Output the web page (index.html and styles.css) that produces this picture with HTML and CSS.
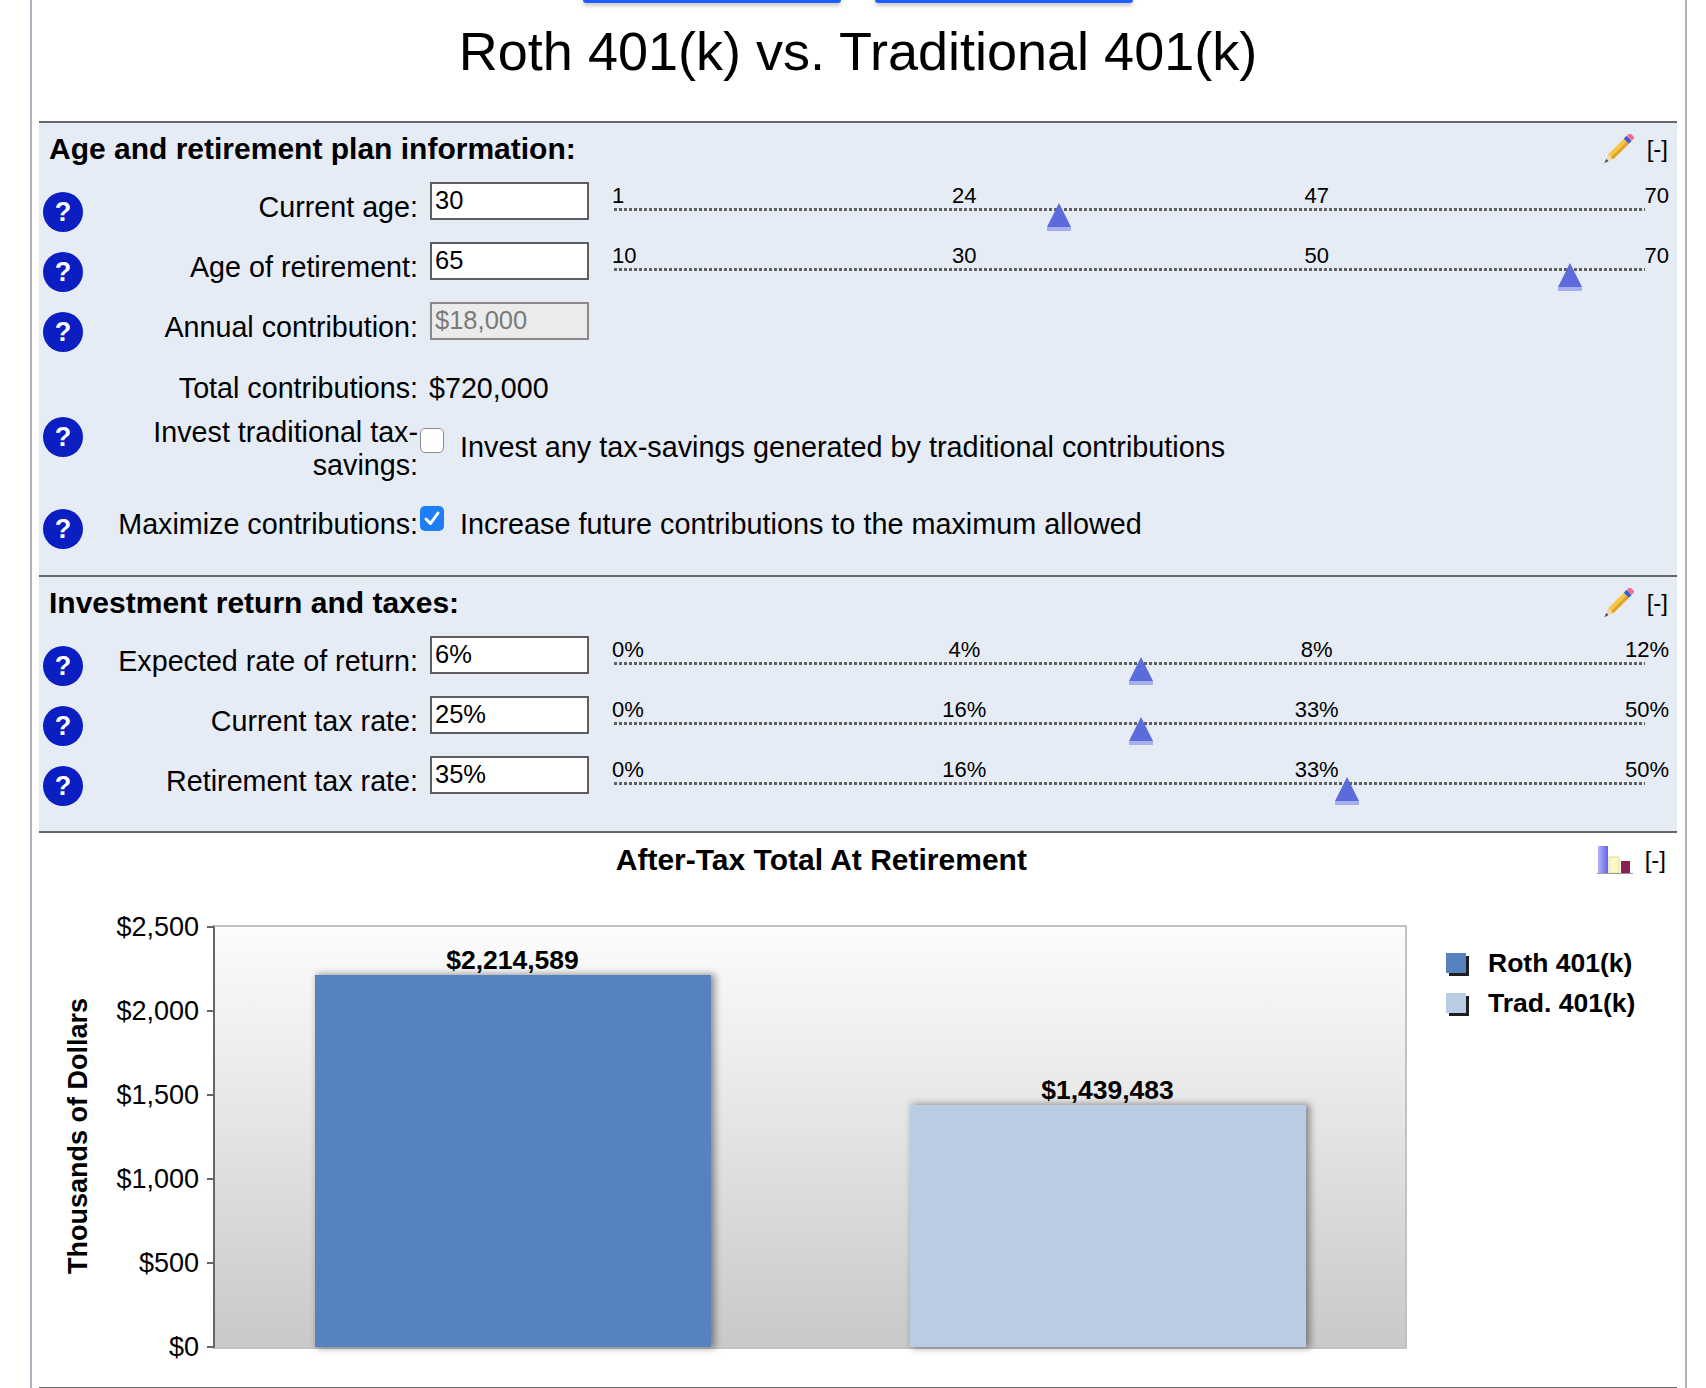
FILE: index.html
```html
<!DOCTYPE html>
<html lang="en">
<head>
<meta charset="utf-8">
<title>Roth 401(k) vs. Traditional 401(k)</title>
<link rel="stylesheet" href="styles.css">
</head>
<body>
<div class="frame">
  <div class="tabs"><span class="tab"></span><span class="tab"></span></div>
  <h1 class="title">Roth 401(k) vs. Traditional 401(k)</h1>

  <section class="panel panel-age">
    <div class="panel-head">
      <h2 class="panel-title">Age and retirement plan information:</h2>
      <div class="tools">
        <svg class="pencil" width="31" height="30" viewBox="0 0 31 30" aria-hidden="true">
          <g transform="rotate(-45 15.5 15) translate(15.5 15)">
            <polygon points="-20,0 -15.5,-1.6 -15.5,1.6" fill="#4a4a4a"/>
            <polygon points="-15.5,-1.6 -11,-3.6 -11,3.6 -15.5,1.6" fill="#f3d7a6"/>
            <rect x="-11" y="-3.6" width="22" height="7.2" fill="#f6c64a"/>
            <rect x="-11" y="0.6" width="22" height="3" fill="#e0a326"/>
            <rect x="11" y="-3.6" width="4" height="7.2" fill="#3f5cc8"/>
            <rect x="15" y="-3.6" width="4.5" height="7.2" rx="2" fill="#f2708c"/>
          </g>
        </svg>
        <span class="toggle">[-]</span>
      </div>
    </div>

    <div class="row r-first">
      <span class="help">?</span>
      <span class="label">Current age:</span>
      <input class="field" type="text" value="30">
      <div class="slider">
        <div class="ticks"><span class="t0">1</span><span class="t1">24</span><span class="t2">47</span><span class="t3">70</span></div>
        <div class="track">
          <span class="thumb" style="left: calc(0.4203 * 1030px)"><svg width="24" height="28" viewBox="0 0 24 28"><polygon points="12,0 24,24 0,24" fill="#5b6bdc"/><rect x="0" y="24" width="24" height="4" fill="#a7afee"/></svg></span>
        </div>
      </div>
    </div>

    <div class="row">
      <span class="help">?</span>
      <span class="label">Age of retirement:</span>
      <input class="field" type="text" value="65">
      <div class="slider">
        <div class="ticks"><span class="t0">10</span><span class="t1">30</span><span class="t2">50</span><span class="t3">70</span></div>
        <div class="track">
          <span class="thumb" style="left: calc(0.9167 * 1030px)"><svg width="24" height="28" viewBox="0 0 24 28"><polygon points="12,0 24,24 0,24" fill="#5b6bdc"/><rect x="0" y="24" width="24" height="4" fill="#a7afee"/></svg></span>
        </div>
      </div>
    </div>

    <div class="row">
      <span class="help">?</span>
      <span class="label">Annual contribution:</span>
      <input class="field" type="text" value="$18,000" disabled>
    </div>

    <div class="row r-total">
      <span class="help-space"></span>
      <span class="label">Total contributions:</span>
      <span class="value">$720,000</span>
    </div>

    <div class="row r-invest">
      <span class="help">?</span>
      <span class="label">Invest traditional tax-savings:</span>
      <div class="check-field cf-invest">
        <span class="cb"></span>
        <span class="check-text">Invest any tax-savings generated by traditional contributions</span>
      </div>
    </div>

    <div class="row r-max">
      <span class="help">?</span>
      <span class="label">Maximize contributions:</span>
      <div class="check-field cf-max">
        <span class="cb checked"><svg width="24" height="25" viewBox="0 0 24 25"><path d="M6 13 L10.5 17.5 L18 7" fill="none" stroke="#fff" stroke-width="3" stroke-linecap="round" stroke-linejoin="round"/></svg></span>
        <span class="check-text">Increase future contributions to the maximum allowed</span>
      </div>
    </div>
  </section>

  <section class="panel panel-tax">
    <div class="panel-head">
      <h2 class="panel-title">Investment return and taxes:</h2>
      <div class="tools">
        <svg class="pencil" width="31" height="30" viewBox="0 0 31 30" aria-hidden="true">
          <g transform="rotate(-45 15.5 15) translate(15.5 15)">
            <polygon points="-20,0 -15.5,-1.6 -15.5,1.6" fill="#4a4a4a"/>
            <polygon points="-15.5,-1.6 -11,-3.6 -11,3.6 -15.5,1.6" fill="#f3d7a6"/>
            <rect x="-11" y="-3.6" width="22" height="7.2" fill="#f6c64a"/>
            <rect x="-11" y="0.6" width="22" height="3" fill="#e0a326"/>
            <rect x="11" y="-3.6" width="4" height="7.2" fill="#3f5cc8"/>
            <rect x="15" y="-3.6" width="4.5" height="7.2" rx="2" fill="#f2708c"/>
          </g>
        </svg>
        <span class="toggle">[-]</span>
      </div>
    </div>

    <div class="row r-first">
      <span class="help">?</span>
      <span class="label">Expected rate of return:</span>
      <input class="field" type="text" value="6%">
      <div class="slider">
        <div class="ticks"><span class="t0">0%</span><span class="t1">4%</span><span class="t2">8%</span><span class="t3">12%</span></div>
        <div class="track">
          <span class="thumb" style="left: calc(0.5 * 1030px)"><svg width="24" height="28" viewBox="0 0 24 28"><polygon points="12,0 24,24 0,24" fill="#5b6bdc"/><rect x="0" y="24" width="24" height="4" fill="#a7afee"/></svg></span>
        </div>
      </div>
    </div>

    <div class="row">
      <span class="help">?</span>
      <span class="label">Current tax rate:</span>
      <input class="field" type="text" value="25%">
      <div class="slider">
        <div class="ticks"><span class="t0">0%</span><span class="t1">16%</span><span class="t2">33%</span><span class="t3">50%</span></div>
        <div class="track">
          <span class="thumb" style="left: calc(0.5 * 1030px)"><svg width="24" height="28" viewBox="0 0 24 28"><polygon points="12,0 24,24 0,24" fill="#5b6bdc"/><rect x="0" y="24" width="24" height="4" fill="#a7afee"/></svg></span>
        </div>
      </div>
    </div>

    <div class="row">
      <span class="help">?</span>
      <span class="label">Retirement tax rate:</span>
      <input class="field" type="text" value="35%">
      <div class="slider">
        <div class="ticks"><span class="t0">0%</span><span class="t1">16%</span><span class="t2">33%</span><span class="t3">50%</span></div>
        <div class="track">
          <span class="thumb" style="left: calc(0.7 * 1030px)"><svg width="24" height="28" viewBox="0 0 24 28"><polygon points="12,0 24,24 0,24" fill="#5b6bdc"/><rect x="0" y="24" width="24" height="4" fill="#a7afee"/></svg></span>
        </div>
      </div>
    </div>
  </section>

  <section class="chart">
    <div class="chart-head">
      <h2 class="chart-title">After-Tax Total At Retirement</h2>
      <div class="tools chart-tools">
        <svg class="bars-icon" width="36" height="28" viewBox="0 0 36 28" aria-hidden="true">
          <defs>
            <linearGradient id="gBlue" x1="0" y1="0" x2="1" y2="0">
              <stop offset="0" stop-color="#b4b4fa"/>
              <stop offset="1" stop-color="#6464ee"/>
            </linearGradient>
          </defs>
          <rect x="1" y="0" width="10" height="27" fill="url(#gBlue)"/>
          <rect x="12" y="11" width="10" height="16" fill="#fbf8c4" stroke="#e2dc9a" stroke-width="1"/>
          <rect x="24" y="15" width="9" height="12" fill="#8a1f52"/>
          <rect x="0" y="27" width="36" height="1" fill="#9a9a9a"/>
        </svg>
        <span class="toggle">[-]</span>
      </div>
    </div>

    <div class="chart-body">
      <div class="ytitle">Thousands of Dollars</div>
      <div class="ylabels">
        <div class="ytick"><span>$2,500</span><i></i></div>
        <div class="ytick"><span>$2,000</span><i></i></div>
        <div class="ytick"><span>$1,500</span><i></i></div>
        <div class="ytick"><span>$1,000</span><i></i></div>
        <div class="ytick"><span>$500</span><i></i></div>
        <div class="ytick"><span>$0</span><i></i></div>
      </div>
      <div class="plot">
        <div class="cat">
          <div class="bar-value">$2,214,589</div>
          <div class="bar bar-roth" style="height: 372px"></div>
        </div>
        <div class="cat">
          <div class="bar-value">$1,439,483</div>
          <div class="bar bar-trad" style="height: 242px"></div>
        </div>
      </div>
      <div class="legend">
        <div class="legend-item"><span class="swatch swatch-roth"></span><span>Roth 401(k)</span></div>
        <div class="legend-item"><span class="swatch swatch-trad"></span><span>Trad. 401(k)</span></div>
      </div>
    </div>
  </section>
</div>
</body>
</html>
```

FILE: styles.css
```css
* {
  box-sizing: border-box;
}

html,
body {
  margin: 0;
  padding: 0;
  background: #ffffff;
  overflow: hidden;
}

body {
  font-family: "Liberation Sans", Arial, Helvetica, sans-serif;
  color: #000000;
}

.frame {
  margin-left: 30px;
  width: 1657px;
  height: 1388px;
  border-left: 2px solid #aeb1bd;
  border-right: 2px solid #aeb1bd;
  padding: 0 8px 0 7px;
}

/* cut-off buttons at the very top */
.tabs {
  display: flex;
  justify-content: center;
  gap: 34px;
  height: 3px;
}

.tab {
  width: 258px;
  height: 3px;
  background: #1f5fff;
  border-radius: 0 0 6px 6px;
  box-shadow: 0 2px 4px rgba(0, 0, 0, 0.35);
}

.title {
  margin: 16px 0 38px;
  font-size: 54px;
  font-weight: normal;
  line-height: 64px;
  text-align: center;
}

/* input panels */
.panel {
  background: #e6ecf5;
  border-top: 2px solid #666666;
  padding: 9px 0 34px;
}

.panel-tax {
  padding-bottom: 33px;
}

.panel-head {
  display: flex;
  align-items: center;
  height: 34px;
  padding-left: 10px;
}

.panel-title {
  flex: 1;
  margin: 0;
  font-size: 30px;
  font-weight: bold;
  line-height: 34px;
}

.tools {
  display: flex;
  align-items: center;
  gap: 13px;
  padding-right: 9px;
}

.pencil {
  display: block;
}

.toggle {
  font-size: 24px;
  line-height: 24px;
}

.row {
  display: flex;
  align-items: flex-start;
  height: 33px;
  margin-top: 27px;
}

.row.r-first {
  margin-top: 25px;
}

.row.r-total {
  margin-top: 28px;
}

.row.r-invest {
  height: 66px;
  margin-top: 11px;
}

.row.r-max {
  margin-top: 26px;
}

.help {
  flex: none;
  margin-left: 4px;
  margin-top: 1px;
  width: 40px;
  height: 40px;
  border-radius: 50%;
  background: #0a1ec2;
  color: #ffffff;
  font-size: 27px;
  font-weight: bold;
  display: flex;
  align-items: center;
  justify-content: center;
}

.help-space {
  flex: none;
  margin-left: 4px;
  width: 40px;
  height: 1px;
}

.label {
  flex: none;
  width: 335px;
  text-align: right;
  font-size: 28.7px;
  line-height: 33px;
}

.field {
  flex: none;
  margin: -9px 0 0 12px;
  width: 159px;
  height: 38px;
  border: 2px solid #5e5e5e;
  border-radius: 0;
  background: #ffffff;
  padding: 0 3px 2px;
  font-family: "Liberation Sans", Arial, Helvetica, sans-serif;
  font-size: 25.5px;
  color: #000000;
  outline: none;
}

.field:disabled {
  background: #ebebeb;
  color: #7a7a7a;
  border-color: #8a8a8a;
}

.value {
  margin-left: 11px;
  font-size: 28.7px;
  line-height: 33px;
}

/* sliders */
.slider {
  flex: none;
  margin: -6px 0 0 23px;
  width: 1057px;
}

.ticks {
  display: grid;
  grid-template-columns: repeat(6, 1fr);
  font-size: 22px;
  line-height: 22px;
}

.t0 {
  grid-column: 1;
  text-align: left;
}

.t1 {
  grid-column: 2 / 4;
  text-align: center;
}

.t2 {
  grid-column: 4 / 6;
  text-align: center;
}

.t3 {
  grid-column: 6;
  text-align: right;
}

.track {
  position: relative;
  margin: 1px 0 0 2px;
  width: 1031px;
  height: 3px;
  background: repeating-linear-gradient(to right, #5f5f5f 0 3px, transparent 3px 5px);
}

.thumb {
  position: absolute;
  top: -5px;
  width: 24px;
  height: 28px;
}

.thumb svg {
  display: block;
}

/* checkboxes */
.check-field {
  display: flex;
  align-items: flex-start;
  margin-left: 2px;
}

.cf-invest {
  margin-top: 15px;
}

.cf-invest .cb {
  margin-top: -3px;
}

.cf-max .cb {
  margin-top: -2px;
}

.cb {
  flex: none;
  width: 24px;
  height: 25px;
  border-radius: 5px;
  background: #ffffff;
  border: 1.5px solid #8c8c8c;
}

.cb.checked {
  background: #1d7ef5;
  border: none;
}

.cb svg {
  display: block;
}

.check-text {
  margin-left: 16px;
  font-size: 28.8px;
  line-height: 33px;
}

/* chart */
.chart {
  background: #ffffff;
  border-top: 2px solid #666666;
  border-bottom: 2px solid #666666;
  padding-top: 10px;
}

.chart-head {
  display: flex;
  align-items: center;
  height: 34px;
}

.chart-title {
  flex: 1;
  margin: 0;
  padding-left: 7px;
  font-size: 30px;
  font-weight: bold;
  line-height: 34px;
  text-align: center;
}

.chart-tools {
  gap: 12px;
  padding-right: 11px;
}

.bars-icon {
  display: block;
}

.chart-body {
  display: flex;
  align-items: flex-start;
  margin-top: 8px;
  height: 502px;
}

.ytitle {
  flex: none;
  margin-left: 24px;
  width: 31px;
  height: 502px;
  writing-mode: vertical-rl;
  transform: rotate(180deg);
  text-align: center;
  font-size: 27px;
  font-weight: bold;
  line-height: 31px;
}

.ylabels {
  flex: none;
  width: 119px;
}

.ytick {
  display: flex;
  justify-content: flex-end;
  align-items: center;
  gap: 8px;
  height: 84px;
  font-size: 27px;
}

.ytick i {
  display: block;
  width: 6px;
  height: 2px;
  background: #666666;
}

.plot {
  flex: none;
  display: flex;
  align-items: flex-end;
  margin-top: 40px;
  width: 1194px;
  height: 424px;
  border-left: 2px solid #666666;
  border-top: 2px solid #c2c2c2;
  border-right: 2px solid #c2c2c2;
  border-bottom: 2px solid #c2c2c2;
  background: linear-gradient(to bottom, #fcfcfc 0%, #e6e6e6 45%, #c9c9c9 100%);
}

.cat {
  flex: 1;
  display: flex;
  flex-direction: column;
  align-items: center;
}

.bar-value {
  font-size: 26.5px;
  font-weight: bold;
  line-height: 30px;
}

.bar {
  width: 396px;
  box-shadow: 3px 0 7px 1px rgba(0, 0, 0, 0.4);
}

.bar-roth {
  background: #5683bf;
}

.bar-trad {
  background: #b9cce4;
}

.legend {
  flex: none;
  margin: 58px 0 0 39px;
}

.legend-item {
  display: flex;
  align-items: center;
  gap: 22px;
  height: 40px;
  font-size: 26.5px;
  font-weight: bold;
}

.swatch {
  flex: none;
  width: 20px;
  height: 20px;
  box-shadow: 3px 3px 0 #1e1e1e;
}

.swatch-roth {
  background: #5683bf;
}

.swatch-trad {
  background: #b9cce4;
}
```
